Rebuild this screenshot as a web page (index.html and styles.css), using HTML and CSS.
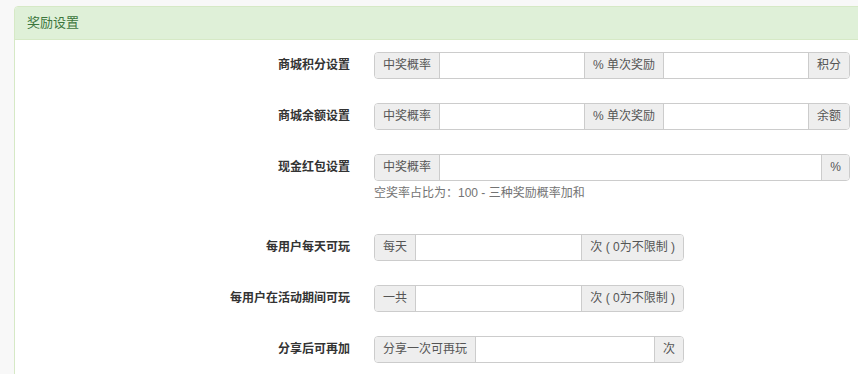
FILE: index.html
```html
<!DOCTYPE html>
<html lang="zh-CN">
<head>
    <meta charset="UTF-8">
    <meta name="viewport" content="width=device-width, initial-scale=1.0">
    <title>奖励设置</title>
    <link rel="stylesheet" href="styles.css">
</head>
<body>
    <div class="panel">
        <div class="panel-heading">奖励设置</div>

        <form class="panel-body">
            <div class="form-group">
                <label class="control-label">商城积分设置</label>
                <div class="input-group wide">
                    <span class="addon">中奖概率</span>
                    <input type="text" class="form-control">
                    <span class="addon">% 单次奖励</span>
                    <input type="text" class="form-control">
                    <span class="addon">积分</span>
                </div>
            </div>

            <div class="form-group">
                <label class="control-label">商城余额设置</label>
                <div class="input-group wide">
                    <span class="addon">中奖概率</span>
                    <input type="text" class="form-control">
                    <span class="addon">% 单次奖励</span>
                    <input type="text" class="form-control">
                    <span class="addon">余额</span>
                </div>
            </div>

            <div class="form-group has-help">
                <label class="control-label">现金红包设置</label>
                <div class="control">
                    <div class="input-group wide">
                        <span class="addon">中奖概率</span>
                        <input type="text" class="form-control">
                        <span class="addon">%</span>
                    </div>
                    <p class="help-block">空奖率占比为：100 - 三种奖励概率加和</p>
                </div>
            </div>

            <div class="form-group">
                <label class="control-label">每用户每天可玩</label>
                <div class="input-group narrow">
                    <span class="addon">每天</span>
                    <input type="text" class="form-control">
                    <span class="addon">次 ( 0为不限制 )</span>
                </div>
            </div>

            <div class="form-group">
                <label class="control-label">每用户在活动期间可玩</label>
                <div class="input-group narrow">
                    <span class="addon">一共</span>
                    <input type="text" class="form-control">
                    <span class="addon">次 ( 0为不限制 )</span>
                </div>
            </div>

            <div class="form-group">
                <label class="control-label">分享后可再加</label>
                <div class="input-group narrow">
                    <span class="addon">分享一次可再玩</span>
                    <input type="text" class="form-control">
                    <span class="addon">次</span>
                </div>
            </div>
        </form>
    </div>
</body>
</html>
```

FILE: styles.css
```css
:root {
    --panel-border: #d6e9c6;
    --panel-heading: #dff0d8;
    --panel-text: #3c763d;
    --addon-bg: #eeeeee;
    --input-border: #cccccc;
    --text-dark: #333;
}

body {
    font-family: 'Liberation Sans', 'Noto Sans CJK SC', sans-serif;
    font-size: 12px;
    color: var(--text-dark);
    margin: 0;
    padding: 6px 0 0 14px;
    background-color: #f8f8f8;
    overflow: hidden;
}

.panel {
    width: 900px;
    background-color: white;
    border: 1px solid var(--panel-border);
    border-radius: 4px;
}

.panel-heading {
    background-color: var(--panel-heading);
    color: var(--panel-text);
    border-bottom: 1px solid var(--panel-border);
    border-radius: 3px 3px 0 0;
    font-size: 13px;
    height: 32px;
    line-height: 32px;
    padding-left: 12px;
}

.panel-body {
    padding-top: 12px;
    margin: 0;
}

.form-group {
    display: flex;
    align-items: flex-start;
    margin-bottom: 24px;
}

.form-group.has-help {
    margin-bottom: 32px;
}

.control-label {
    width: 335px;
    flex-shrink: 0;
    margin-right: 24px;
    text-align: right;
    font-weight: bold;
    line-height: 27px;
}

.input-group {
    display: flex;
    height: 27px;
    border: 1px solid var(--input-border);
    border-radius: 4px;
    box-sizing: border-box;
    overflow: hidden;
}

.input-group.wide {
    width: 476px;
}

.input-group.narrow {
    width: 310px;
}

.addon {
    background-color: var(--addon-bg);
    color: #555;
    padding: 0 8px;
    line-height: 25px;
    white-space: nowrap;
    border-left: 1px solid var(--input-border);
}

.addon:first-child {
    border-left: none;
}

.form-control {
    flex: 1;
    min-width: 0;
    border: none;
    border-left: 1px solid var(--input-border);
    padding: 0 8px;
    font: inherit;
    outline: none;
}

.help-block {
    margin: 3px 0 0;
    color: #737373;
    line-height: 18px;
}
```
